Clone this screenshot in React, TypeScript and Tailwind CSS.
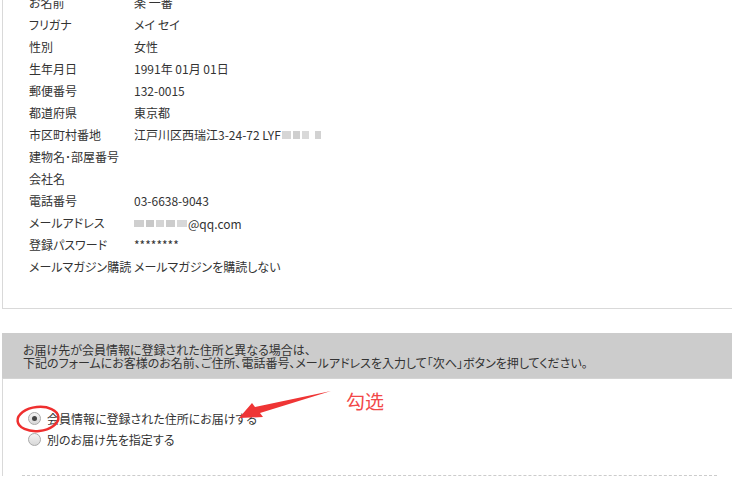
import React from "react";

const rows: [string, React.ReactNode][] = [
  ["お名前", "楽 一番"],
  ["フリガナ", "メイ セイ"],
  ["性別", "女性"],
  ["生年月日", "1991年 01月 01日"],
  ["郵便番号", "132-0015"],
  ["都道府県", "東京都"],
  [
    "市区町村番地",
    <span className="inline-flex items-center">
      江戸川区西瑞江3-24-72 LYF
      <span className="ml-[1px] inline-flex items-center gap-[2px] blur-[0.6px]">
        <span className="h-[8px] w-[9px] bg-[#d6d6d6]" />
        <span className="h-[8px] w-[7px] bg-[#cfcfcf]" />
        <span className="h-[8px] w-[7px] bg-[#d9d9d9]" />
        <span className="ml-[4px] h-[8px] w-[6px] bg-[#d2d2d2]" />
      </span>
    </span>,
  ],
  ["建物名･部屋番号", ""],
  ["会社名", ""],
  ["電話番号", "03-6638-9043"],
  [
    "メールアドレス",
    <span className="inline-flex items-center">
      <span className="mr-[1px] inline-flex items-center gap-[2px] blur-[0.6px]">
        <span className="h-[7px] w-[10px] bg-[#cfcfcf]" />
        <span className="h-[7px] w-[8px] bg-[#c8c8c8]" />
        <span className="h-[7px] w-[8px] bg-[#d4d4d4]" />
        <span className="h-[7px] w-[9px] bg-[#cccccc]" />
        <span className="h-[7px] w-[10px] bg-[#d8d8d8]" />
      </span>
      @qq.com
    </span>,
  ],
  ["登録パスワード", "********"],
  ["メールマガジン購読", "メールマガジンを購読しない"],
];

function Radio({ checked }: { checked?: boolean }) {
  return (
    <span className="flex h-[13px] w-[13px] items-center justify-center rounded-full border border-[#a9a9a9] bg-gradient-to-b from-[#f4f4f4] to-[#d8d8d8]">
      {checked && <span className="h-[5px] w-[5px] rounded-full bg-[#444]" />}
    </span>
  );
}

export default function App() {
  return (
    <div className="relative h-[477px] w-[732px] overflow-hidden bg-white font-['Noto_Sans_CJK_JP',sans-serif] text-[12px] text-[#333] [font-feature-settings:'palt']">
      <div className="ml-[2px] -mt-[8px] border-b border-l border-[#d9d9d9] pb-[30px]">
        {rows.map(([label, value]) => (
          <div key={label} className="flex h-[22px] items-center whitespace-nowrap pl-[26px] leading-none">
            <span className="w-[105px] shrink-0">{label}</span>
            <span>{value}</span>
          </div>
        ))}
      </div>

      <div className="ml-[2px] mt-[24px]">
        <div className="border-b border-[#d4d4d4] bg-[#cccccc] pb-[9px] pl-[21px] pt-[10px] leading-[13px]">
          <p>お届け先が会員情報に登録された住所と異なる場合は、</p>
          <p>下記のフォームにお客様のお名前、ご住所、電話番号、メールアドレスを入力して「次へ」ボタンを押してください。</p>
        </div>
        <div className="border-l border-[#d9d9d9] pt-[29px]">
          <label className="ml-[25px] flex h-[21px] items-center gap-[6px]">
            <Radio checked />
            <span>会員情報に登録された住所にお届けする</span>
          </label>
          <label className="ml-[25px] flex h-[21px] items-center gap-[6px]">
            <Radio />
            <span>別のお届け先を指定する</span>
          </label>
          <div className="ml-[19px] mr-[15px] mt-[25px] border-t border-dashed border-[#cccccc]" />
        </div>
      </div>

      <svg className="pointer-events-none absolute left-0 top-0" width="732" height="477">
        <ellipse cx="38" cy="419" rx="20.5" ry="12" transform="rotate(-6 38 419)" fill="none" stroke="#ef2f2f" strokeWidth="2.5" />
        <polygon points="239,418 252,403 255,407 331,391 260,413 263,417" fill="#ef3535" />
      </svg>
      <span className="absolute left-[346px] top-[391px] font-['Noto_Sans_CJK_SC',sans-serif] text-[19px] leading-none text-[#f24848]">
        勾选
      </span>
    </div>
  );
}
